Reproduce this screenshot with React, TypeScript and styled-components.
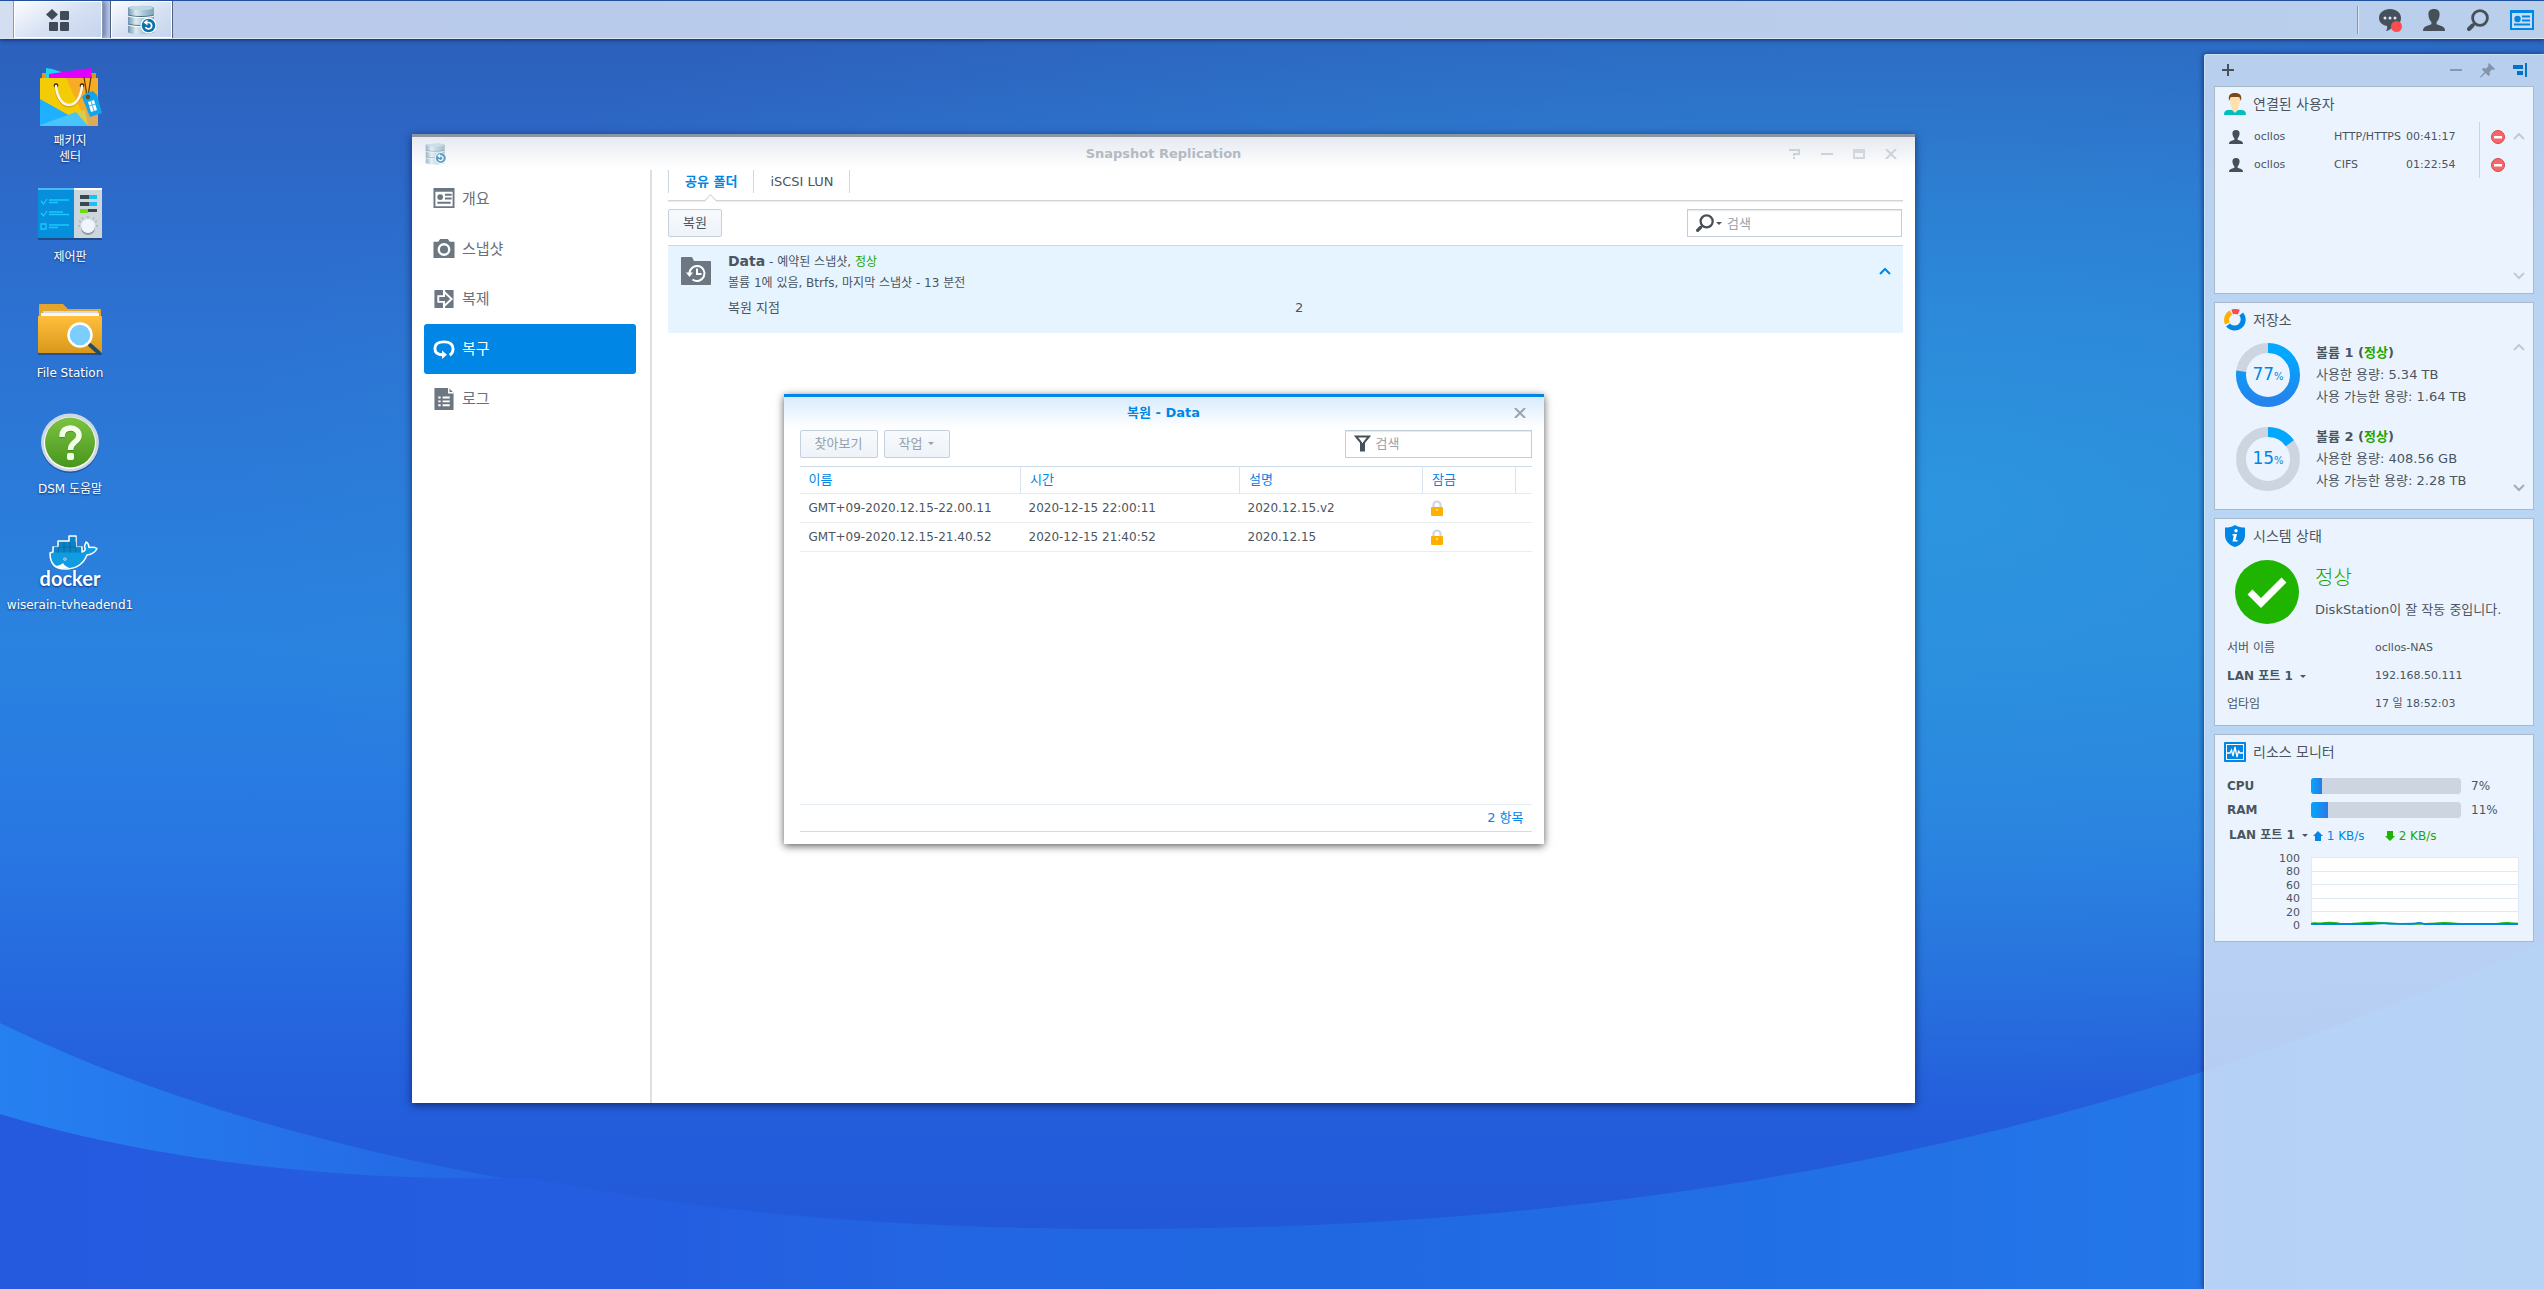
import React from "react";
import styled, { createGlobalStyle, css } from "styled-components";

const blue = "#0086e5";
const green = "#1fa500";
const text = "#4b5560";
const line = "#dbe4ec";

const Global = createGlobalStyle`
  *, *::before, *::after { box-sizing: border-box; }
  html, body, #root { height: 100%; margin: 0; }
  body {
    overflow: hidden;
    color: ${text};
    font: 12px/16px "DejaVu Sans", "Noto Sans CJK KR", sans-serif;
  }
  button, input { font: inherit; color: inherit; margin: 0; }
  button { border: 0; background: none; padding: 0; cursor: pointer; }
  a { color: inherit; text-decoration: none; }
  svg { display: block; flex: none; }
  h1, h2, h3, p, ul, dl, dd, dt { margin: 0; padding: 0; font-size: inherit; font-weight: inherit; }
  ul { list-style: none; }
`;

/* ---------- Shell ---------- */

const Shell = styled.div`
  position: relative;
  isolation: isolate;
  display: flex;
  flex-direction: column;
  height: 100vh;
`;

const WallpaperSvg = styled.svg`
  position: absolute;
  inset: 0;
  z-index: -1;
  width: 100%;
  height: 100%;
`;

const Taskbar = styled.header`
  display: flex;
  align-items: stretch;
  flex: none;
  height: 39px;
  border-top: 1px solid #23509c;
  border-bottom: 1px solid #dce6f4;
  background: linear-gradient(90deg, #b9caec, #b9cfea);
  box-shadow: 0 1px 4px rgba(0, 20, 70, 0.7);
`;

const TaskEdge = styled.div`
  width: 13px;
  background: #d3def1;
`;

const TaskButton = styled.button<{ $width: number; $main?: boolean }>`
  display: grid;
  place-items: center;
  width: ${(p) => p.$width}px;
  border: 1px solid #fff;
  outline: 1px solid #51617d;
  outline-offset: 0;
  clip-path: inset(0 -1px 0 -1px);
  background: linear-gradient(150deg, #fafcff, #d5e0f2 55%, #c7d4ee);
  ${(p) => p.$main && css`
    margin: 0 9px 0 1px;
    box-shadow: 4px 0 5px rgba(60, 80, 130, 0.6);
    outline-color: #8b99b5;
    clip-path: inset(0 -9px 0 -1px);
  `}
`;

const Tray = styled.nav`
  display: flex;
  align-items: center;
  margin-left: auto;
  &::before {
    content: "";
    width: 2px;
    height: 28px;
    margin-right: 9px;
    border-left: 1px solid #8494b3;
    border-right: 1px solid #dbe6f6;
  }
`;

const TrayButton = styled.button`
  display: grid;
  place-items: center;
  width: 44px;
  height: 36px;
`;

const Stage = styled.main`
  display: flex;
  flex: 1;
  min-height: 0;
`;

const Shortcuts = styled.ul`
  width: 140px;
  padding-top: 25px;
`;

const Shortcut = styled.li`
  height: 116px;
`;

const ShortcutLink = styled.a`
  display: flex;
  flex-direction: column;
  align-items: center;
  gap: 5px;
  color: #fff;
  font-size: 12px;
  text-align: center;
  text-shadow: 0 1px 2px rgba(0, 20, 80, 0.7);
`;

const ShortcutLabel = styled.span<{ $narrow?: boolean }>`
  width: ${(p) => (p.$narrow ? "56px" : "auto")};
  word-break: keep-all;
`;

const Workspace = styled.section`
  flex: 1;
  display: flex;
  min-width: 0;
  padding: 95px 289px 186px 272px;
`;

/* ---------- Windows ---------- */

const AppWindow = styled.article`
  position: relative;
  flex: 1;
  display: flex;
  flex-direction: column;
  min-width: 0;
  border-top: 3px solid #8a96a3;
  background: linear-gradient(#e5e9ef, #fff 31px);
  box-shadow: 0 2px 8px rgba(0, 15, 60, 0.65);
`;

const TitleBar = styled.header`
  display: grid;
  grid-template-columns: 1fr auto 1fr;
  align-items: center;
  flex: none;
  height: 33px;
  padding: 0 13px;
`;

const WindowTitle = styled.h1<{ $active?: boolean }>`
  grid-column: 2;
  color: ${(p) => (p.$active ? blue : "#b3bac4")};
  font-size: 13px;
  font-weight: bold;
`;

const WindowControls = styled.div`
  display: flex;
  justify-content: flex-end;
  gap: 20px;
  padding-right: 5px;
`;

const ControlButton = styled.button`
  width: 12px;
  height: 14px;
  display: grid;
  place-items: center;
`;

const WindowBody = styled.div`
  flex: 1;
  display: flex;
  min-height: 0;
`;

const SideNav = styled.nav`
  width: 240px;
  flex: none;
  padding: 4px 14px 0 12px;
  border-right: 2px solid #dcdfe4;
`;

const NavItem = styled.a<{ $active?: boolean }>`
  display: flex;
  align-items: center;
  gap: 7px;
  height: 50px;
  padding-left: 9px;
  border-radius: 3px;
  font-size: 15px;
  line-height: 20px;
  color: ${(p) => (p.$active ? "#fff" : "#66717c")};
  background: ${(p) => (p.$active ? blue : "transparent")};
`;

const Content = styled.section`
  flex: 1;
  min-width: 0;
  padding: 0 12px 0 16px;
`;

const TabList = styled.div`
  display: flex;
  height: 31px;
  padding-bottom: 7px;
  border-bottom: 1px solid #d0d3d8;
  box-shadow: 0 1px 1px #ededef;
`;

const Tab = styled.button<{ $active?: boolean }>`
  position: relative;
  padding: 0 16px;
  border-right: 1px solid #ccd8e6;
  font-size: 13px;
  ${(p) => p.$active && css`
    border-left: 1px solid #ccd8e6;
    color: ${blue};
    font-weight: bold;
    &::after {
      content: "";
      position: absolute;
      left: 50%;
      top: 26px;
      width: 9px;
      height: 9px;
      margin-left: -5px;
      border: 1px solid #d0d3d8;
      border-right: 0;
      border-bottom: 0;
      background: linear-gradient(135deg, #fff 60%, transparent 60%);
      transform: rotate(45deg);
    }
  `}
`;

const Toolbar = styled.div<{ $dialog?: boolean }>`
  display: flex;
  gap: 6px;
  padding: ${(p) => (p.$dialog ? "0 0 8px" : "8px 1px 8px 0")};
`;

const PushButton = styled.button<{ $width: number }>`
  display: inline-flex;
  align-items: center;
  justify-content: center;
  gap: 6px;
  width: ${(p) => p.$width}px;
  height: 28px;
  border: 1px solid #c5d0de;
  border-radius: 2px;
  background: linear-gradient(#f7fafd, #eef3f9);
  font-size: 13px;
  &:disabled { color: #96a0aa; cursor: default; }
`;

const SearchBox = styled.div<{ $width: number }>`
  display: flex;
  align-items: center;
  width: ${(p) => p.$width}px;
  height: 28px;
  margin-left: auto;
  padding-left: 8px;
  border: 1px solid #c3cedb;
  background: #fff;
  box-shadow: inset 0 1px 1px #e6e9ed;
`;

const SearchMode = styled.button`
  display: flex;
  align-items: center;
  gap: 2px;
`;

const SearchInput = styled.input`
  flex: 1;
  min-width: 0;
  height: 24px;
  padding: 0 5px;
  border: 0;
  outline: 0;
  background: none;
  font-size: 13px;
  &::placeholder { color: #98a2ac; opacity: 1; }
`;

const Caret = styled.span`
  border: 3px solid transparent;
  border-top-color: currentColor;
  border-bottom: 0;
`;

const FolderRow = styled.section`
  display: flex;
  align-items: flex-start;
  height: 88px;
  padding: 5px 12px 0 13px;
  border-top: 1px solid #cdd8e3;
  background: #e6f4ff;
  > svg { margin-top: 6px; }
`;

const FolderInfo = styled.div`
  flex: 1;
  padding-left: 17px;
`;

const FolderTitle = styled.h2`
  line-height: 20px;
  > strong { font-size: 14px; }
`;

const FolderMeta = styled.p`
  line-height: 22px;
`;

const PointLine = styled.dl`
  display: grid;
  grid-template-columns: 567px 1fr;
  font-size: 13px;
  line-height: 28px;
`;

const RowToggle = styled.button`
  margin-top: 16px;
`;

const Good = styled.span`
  color: ${green};
`;

/* ---------- Dialog ---------- */

const DialogLayer = styled.div`
  position: absolute;
  inset: 0;
  display: grid;
  place-items: center;
`;

const DialogBox = styled.section`
  display: flex;
  flex-direction: column;
  width: 760px;
  height: 450px;
  margin-top: -3px;
  border-top: 3px solid ${blue};
  background: linear-gradient(#d8ebfb, #fff 31px);
  box-shadow: 0 2px 8px rgba(0, 0, 0, 0.65);
`;

const DialogBody = styled.div`
  display: flex;
  flex-direction: column;
  flex: 1;
  padding: 0 12px 12px 16px;
`;

const SnapTable = styled.table`
  width: 100%;
  table-layout: fixed;
  border-collapse: collapse;
  border-top: 1px solid #cfdbe6;
`;

const HeadCell = styled.th<{ $width?: number }>`
  width: ${(p) => (p.$width ? `${p.$width}px` : "auto")};
  height: 27px;
  padding: 0 9px;
  border-right: 1px solid ${line};
  border-bottom: 1px solid #e4ebf1;
  color: ${blue};
  font-size: 13px;
  font-weight: normal;
  text-align: left;
  &:last-child { border-right: 0; }
`;

const Cell = styled.td`
  height: 29px;
  padding: 0 8px;
  border-bottom: 1px solid #e8edf2;
  &:first-child { padding-left: 9px; }
`;

const DialogFooter = styled.footer`
  margin-top: auto;
  padding-right: 8px;
  border-top: 1px solid #e4ebf1;
  border-bottom: 1px solid #d2dce6;
  color: ${blue};
  font-size: 13px;
  line-height: 26px;
  text-align: right;
`;

/* ---------- Widget panel ---------- */

const Panel = styled.aside`
  flex: none;
  width: 340px;
  margin-top: 15px;
  padding: 0 10px;
  border-radius: 3px 0 0 0;
  background: rgba(222, 233, 249, 0.79);
  box-shadow: inset 1px 1px 0 rgba(230, 240, 252, 0.5), -1px 0 5px rgba(0, 20, 70, 0.6);
`;

const PanelBar = styled.div`
  display: flex;
  align-items: center;
  gap: 18px;
  height: 32px;
  padding: 0 7px 0 8px;
`;

const PanelButton = styled.button<{ $push?: boolean }>`
  margin-right: ${(p) => (p.$push ? "auto" : "0")};
`;

const WidgetList = styled.div`
  display: grid;
  gap: 8px;
`;

const WidgetCard = styled.section`
  display: flex;
  flex-direction: column;
  min-height: 208px;
  border: 1px solid #a9b9cc;
  background: #ebf4fe;
`;

const WidgetHead = styled.header`
  display: flex;
  align-items: center;
  gap: 7px;
  height: 35px;
  padding: 0 0 2px 9px;
`;

const WidgetTitle = styled.h2`
  font-size: 14px;
  line-height: 20px;
`;

const WidgetBody = styled.div`
  display: flex;
  flex: 1;
  align-items: stretch;
`;

const Scroller = styled.div<{ $top: number; $bottom: number }>`
  display: flex;
  flex-direction: column;
  justify-content: space-between;
  margin-left: auto;
  padding: ${(p) => p.$top}px 8px ${(p) => p.$bottom}px 0;
`;

const UserTable = styled.table`
  align-self: flex-start;
  border-collapse: collapse;
  table-layout: fixed;
  width: 298px;
  font-size: 11px;
`;

const UserCell = styled.td<{ $width: number; $left?: number; $divider?: boolean }>`
  width: ${(p) => p.$width}px;
  height: 28px;
  padding: 1px 0 0 ${(p) => p.$left ?? 0}px;
  white-space: nowrap;
  border-right: ${(p) => (p.$divider ? "1px solid #cbd5e0" : "0")};
  > button { display: block; }
`;

const VolumeList = styled.ul`
  display: grid;
  align-content: start;
  gap: 18px;
  padding: 4px 0 0 21px;
`;

const Volume = styled.li`
  display: flex;
  align-items: center;
  gap: 16px;
  font-size: 13px;
  line-height: 22px;
`;

const Donut = styled.div`
  display: grid;
  place-items: center;
  width: 64px;
  height: 64px;
  > * { grid-area: 1 / 1; }
`;

const Percent = styled.span`
  color: ${blue};
  font-size: 17px;
  > small { font-size: 10px; }
`;

const StatusRow = styled.div`
  display: flex;
  align-items: center;
  gap: 16px;
  padding: 6px 0 10px 20px;
`;

const StatusText = styled.div`
  display: grid;
  gap: 8px;
  font-size: 13px;
  line-height: 20px;
`;

const StatusWord = styled.p`
  color: ${green};
  font-size: 20px;
  line-height: 28px;
  font-weight: 300;
`;

const InfoList = styled.dl`
  display: grid;
  grid-template-columns: 148px 1fr;
  padding-left: 12px;
  font-size: 11px;
  line-height: 28px;
  dt { font-size: 12px; }
`;

const PortButton = styled.button`
  display: inline-flex;
  align-items: center;
  gap: 7px;
  font-weight: bold;
`;

const Meters = styled.div`
  padding: 4px 0 0 12px;
`;

const Meter = styled.div`
  display: grid;
  grid-template-columns: 84px 150px 1fr;
  align-items: center;
  height: 24px;
  > strong + div + span { padding-left: 10px; }
`;

const Bar = styled.div`
  height: 16px;
  overflow: hidden;
  border-radius: 3px;
  background: #cdd6e0;
`;

const BarFill = styled.div`
  height: 100%;
  background: linear-gradient(90deg, #00a8ff, #2f78e4);
`;

const Traffic = styled.div`
  display: flex;
  align-items: center;
  height: 26px;
  padding-left: 2px;
`;

const Rate = styled.span<{ $color: string; $left: number }>`
  display: inline-flex;
  align-items: center;
  gap: 4px;
  margin-left: ${(p) => p.$left}px;
  padding-top: 2px;
  color: ${(p) => p.$color};
`;

const ChartRow = styled.div`
  display: flex;
  gap: 11px;
  padding: 4px 14px 0 0;
`;

const Axis = styled.div`
  display: flex;
  flex-direction: column;
  justify-content: space-between;
  width: 85px;
  height: 80px;
  font-size: 11px;
  line-height: 13px;
  text-align: right;
`;

const Plot = styled.svg`
  flex: 1;
  min-width: 0;
  height: 69px;
  margin-top: 5px;
`;

/* ---------- Drawings ---------- */

const Wallpaper = () => (
  <WallpaperSvg viewBox="0 0 2544 1289" preserveAspectRatio="none" aria-hidden="true">
    <defs>
      <linearGradient id="sky" x1="0" y1="0" x2="0" y2="1">
        <stop offset="0" stopColor="#2c5fb9" />
        <stop offset="0.12" stopColor="#2d67c6" />
        <stop offset="0.25" stopColor="#2c72d2" />
        <stop offset="0.5" stopColor="#2a83e0" />
        <stop offset="0.66" stopColor="#2877e3" />
        <stop offset="0.84" stopColor="#245fdc" />
        <stop offset="1" stopColor="#2156d6" />
      </linearGradient>
      <radialGradient id="glow" cx="0.5" cy="0.5" r="0.5">
        <stop offset="0" stopColor="#2d9ae0" stopOpacity="0.85" />
        <stop offset="0.5" stopColor="#2d94dc" stopOpacity="0.5" />
        <stop offset="1" stopColor="#2d8bd8" stopOpacity="0" />
      </radialGradient>
      <linearGradient id="ground" x1="0" y1="0" x2="1" y2="0">
        <stop offset="0" stopColor="#2680f0" />
        <stop offset="0.2" stopColor="#2466e4" />
        <stop offset="0.5" stopColor="#2067e2" />
        <stop offset="0.85" stopColor="#2376e8" />
        <stop offset="1" stopColor="#2480ee" />
      </linearGradient>
      <linearGradient id="hill" x1="0" y1="0" x2="1" y2="0">
        <stop offset="0" stopColor="#255adf" />
        <stop offset="0.6" stopColor="#245ee0" />
        <stop offset="1" stopColor="#2466e4" stopOpacity="0" />
      </linearGradient>
    </defs>
    <rect width="2544" height="1289" fill="url(#sky)" />
    <ellipse cx="1900" cy="500" rx="1700" ry="620" fill="url(#glow)" />
    <path d="M0 1023C260 1150 640 1229 1120 1229C1600 1229 2050 1160 2544 942V1289H0Z" fill="url(#ground)" />
    <path d="M0 1114C150 1160 340 1182 530 1178C700 1212 900 1229 1120 1229V1289H0Z" fill="url(#hill)" />
  </WallpaperSvg>
);

const ReplicationIcon = ({ size, faded }: { size: number; faded?: boolean }) => (
  <svg width={size} height={size} viewBox="0 0 30 30" opacity={faded ? 0.65 : 1} aria-hidden="true">
    <defs>
      <linearGradient id="disk" x1="0" x2="1">
        <stop offset="0" stopColor="#6d94b0" />
        <stop offset="0.3" stopColor="#dcebf3" />
        <stop offset="0.6" stopColor="#a9c6d6" />
        <stop offset="1" stopColor="#7fa5bd" />
      </linearGradient>
    </defs>
    <path d="M1 3c0-3 26-3 26 0v24c0 3-26 3-26 0z" fill="url(#disk)" />
    <ellipse cx="14" cy="3" rx="12" ry="2" fill="#bfd6e3" />
    <path d="M1 10c4 2 22 2 26 0M1 19c4 2 22 2 26 0" fill="none" stroke="#4d6b7e" strokeWidth="1" />
    <path d="M1 11c4 2 22 2 26 0M1 20c4 2 22 2 26 0" fill="none" stroke="#fff" strokeWidth="1" />
    <circle cx="21.500" cy="20.500" r="8" fill="#fff" />
    <circle cx="21.500" cy="20.500" r="6.800" fill="#0a72ad" />
    <path d="M19 17.500h2.500a3.200 3.200 0 1 1-3 4.500" fill="none" stroke="#fff" strokeWidth="1.700" />
    <path d="M20.500 14.500v6l-4-3z" fill="#fff" />
  </svg>
);

const PersonIcon = ({ size }: { size: number }) => (
  <svg width={size} height={size} viewBox="0 0 22 22" fill="#46505b" aria-hidden="true">
    <path d="M11 0C7 0 5.200 2.200 5.400 5.500C5.500 9 6.800 11.500 8.400 13V15.200L3 17.300C1 18 0 19.500 0 22H22C22 19.500 21 18 19 17.300L13.600 15.200V13C15.200 11.500 16.500 9 16.600 5.500C16.800 2.200 15 0 11 0Z" />
  </svg>
);

const LensIcon = ({ size }: { size: number }) => (
  <svg width={size} height={size} viewBox="0 0 22 22" fill="none" stroke="#46505b" aria-hidden="true">
    <circle cx="13" cy="9" r="7.400" strokeWidth="2.800" />
    <path d="M7.500 14.500L5.500 16.500" strokeWidth="2.500" />
    <path d="M5.500 16.500L2 20" strokeWidth="4" strokeLinecap="round" />
  </svg>
);

const Chevron = ({ down, color }: { down?: boolean; color: string }) => (
  <svg width="12" height="8" viewBox="0 0 12 8" fill="none" stroke={color} strokeWidth="2" aria-hidden="true">
    <path d={down ? "M1 1L6 6L11 1" : "M1 7L6 2L11 7"} />
  </svg>
);

const CloseIcon = ({ color }: { color: string }) => (
  <svg width="12" height="10" viewBox="0 0 12 10" stroke={color} strokeWidth="2" aria-hidden="true">
    <path d="M1 0L11 10M11 0L1 10" />
  </svg>
);

const PackageIcon = () => (
  <svg width="64" height="64" viewBox="0 0 64 64" aria-hidden="true">
    <path d="M4 9h54v6H4z" fill="#d99a1c" />
    <path d="M8 4l6 1 16 5-22 5z" fill="#1fd3f5" />
    <path d="M11 10l42-6 1 11H11z" fill="#e100ff" />
    <rect x="2" y="14" width="58" height="48" rx="1" fill="#f4cc05" />
    <path d="M28 14h31a1 1 0 0 1 1 1v46a1 1 0 0 1-1 1H50z" fill="#f7ac26" />
    <path d="M46 46l14-3v19H50z" fill="#e0a957" />
    <path d="M2 35l48 27H2z" fill="#1fb0ff" />
    <path d="M38 48l9-2 3 16z" fill="#d9cc46" />
    <path d="M2 61l36-13 12 14H3z" fill="#47c4fb" />
    <path d="M18 24c1 10 6 18 13 18s12-8 13-18" fill="none" stroke="#c78b10" strokeWidth="3" opacity=".6" />
    <circle cx="18" cy="21.500" r="2.300" fill="#3a1d00" />
    <circle cx="44" cy="21.500" r="2.300" fill="#3a1d00" />
    <path d="M18 22c1 11 6 19 13 19s12-8 13-19" fill="none" stroke="#fdf6ea" strokeWidth="2.600" strokeLinecap="round" />
    <path d="M46 13l3 19M53 13l-3 19" stroke="#5d3800" strokeWidth="1.200" />
    <path d="M44 33l4-4 7-2 4 4 5 18-12 4z" fill="#12a5ec" />
    <circle cx="50" cy="33" r="2.200" fill="#6b4a1b" />
    <path d="M50 38l6-2 3 10-6 2z" fill="#fff" />
    <path d="M53 37l3 10M50 42l8-2" stroke="#12a5ec" strokeWidth="0.800" />
  </svg>
);

const ControlPanelIcon = () => (
  <svg width="64" height="64" viewBox="0 0 64 64" aria-hidden="true">
    <rect x="0" y="10" width="64" height="50" rx="1" fill="#1d3c6b" opacity=".7" />
    <rect x="0" y="8" width="36" height="50" fill="#058fdc" />
    <rect x="0" y="8" width="36" height="2" fill="#4db8f3" />
    <rect x="36" y="8" width="28" height="50" fill="#cdd6dd" />
    <rect x="36" y="8" width="28" height="2" fill="#fff" />
    <g fill="none" stroke="#19c9fb" strokeWidth="1.300">
      <path d="M3 21l2.500 3L9 19M3 33l2.500 3L9 31M3 44h5v5H3zM11 20h20M11 22.500h9M11 32h14M11 34.500h20M11 45h20M11 47.500h9" />
    </g>
    <path d="M42 15h17v4H42zM42 22h17v4H42zM42 29h17v3H42z" fill="#3a4650" />
    <path d="M51 15h8v4h-8zM51 22h8v4h-8z" fill="#17c2fb" />
    <path d="M42 29h8v4h-8z" fill="#72dc0a" />
    <path d="M50 36v2M44 37.500l1 2M56 37.500l-1 2M41 41l2 1M59 41l-2 1M40 46h2M58 46h2" stroke="#9ba5ae" />
    <circle cx="50" cy="48" r="7" fill="#8f9aa3" />
    <circle cx="50" cy="46" r="7" fill="#eef6fb" />
  </svg>
);

const FileStationIcon = () => (
  <svg width="64" height="64" viewBox="0 0 64 64" aria-hidden="true">
    <defs>
      <linearGradient id="folder" x1="0" x2="0" y1="0" y2="1">
        <stop offset="0" stopColor="#ffbf3c" />
        <stop offset="1" stopColor="#d9981c" />
      </linearGradient>
    </defs>
    <path d="M1 9a1 1 0 0 1 1-1h23l5 5h32a1 1 0 0 1 1 1v10H1z" fill="#e3a62d" />
    <path d="M5 15h55v6H5z" fill="#d8d8d8" />
    <path d="M3 17h58v4H3z" fill="#f6f6f6" />
    <rect x="0" y="21" width="64" height="38" rx="1" fill="#1f3a6e" opacity=".6" />
    <rect x="0" y="20" width="64" height="37" rx="1" fill="url(#folder)" />
    <path d="M52 49l9 8" stroke="#244c66" strokeWidth="4" strokeLinecap="round" />
    <circle cx="42" cy="39" r="11.500" fill="#7bcdfc" stroke="#fff" strokeWidth="2.400" />
  </svg>
);

const HelpIcon = () => (
  <svg width="64" height="64" viewBox="0 0 64 64" aria-hidden="true">
    <defs>
      <linearGradient id="help" x1="0" x2="0" y1="0" y2="1">
        <stop offset="0" stopColor="#7cc242" />
        <stop offset="1" stopColor="#47961c" />
      </linearGradient>
    </defs>
    <circle cx="32" cy="32" r="29" fill="#173d7d" opacity=".6" />
    <circle cx="32" cy="30.500" r="29" fill="#ccd8e4" />
    <circle cx="32" cy="31" r="26" fill="#fff" />
    <circle cx="32" cy="30.500" r="25" fill="url(#help)" />
    <g fill="none" stroke="#2f6d12" strokeWidth="5.500" opacity=".5">
      <path d="M24 26c0-7 4-9 8.500-9s8.500 3 8.500 7.500c0 7-8.500 6-8.500 14.500" />
    </g>
    <path d="M24 25c0-7 4-9 8.500-9s8.500 3 8.500 7.500c0 7-8.500 6-8.500 14.500" fill="none" stroke="#f4ffe9" strokeWidth="5.500" />
    <rect x="29" y="41" width="7" height="7" rx="2" fill="#f4ffe9" />
  </svg>
);

const DockerWord = styled.text`
  font: bold 20px Lato, sans-serif;
  fill: #fff;
`;

const DockerIcon = () => (
  <svg width="64" height="64" viewBox="0 0 64 64" aria-hidden="true">
    <path
      d="M12 25L15 24V19H20V13H31V8H38V19H44V24C47 23 48 22 46.500 18L48 14C50 15 51 17 51 19.500C54 19 57 19 59 20.500C57 25 53 26.500 49 27C45 37 38 41 27 41C17 41 12 35 12 25Z"
      fill="#109be3" stroke="#fff" strokeWidth="1.500" strokeLinejoin="round"
    />
    <path d="M16 19.500h27v5H16zM21 14h17v5H21zM32 9h5.500v5H32z" fill="#0b83c4" />
    <path d="M20.500 19.500v5M26 14v10.500M32 14v10.500M37.500 19.500v5M16 19.200h27" stroke="#06669f" strokeWidth="0.800" />
    <circle cx="27" cy="31" r="1.600" fill="#fff" />
    <circle cx="27" cy="31" r="0.800" fill="#1c4c74" />
    <path d="M17 38c3 0 6-1 8-3 1 2 3 4 6 4.500-5 1.500-10 1-14-1.500z" fill="#fff" />
    <DockerWord x="32" y="58" textAnchor="middle">docker</DockerWord>
  </svg>
);

const navIcons: Record<string, React.ReactNode> = {
  overview: (
    <>
      <path d="M0 0h22v21H0zM2 4v15h18V4z" fillRule="evenodd" />
      <circle cx="7" cy="9.500" r="3" />
      <path d="M12 6h7v2h-7zM12 10h7v2h-7zM4 14.500h14v2H4z" />
    </>
  ),
  camera: (
    <>
      <path d="M0 4h5l2-3h8l2 3h5v17H0z" />
      <circle cx="11" cy="12" r="5.500" fill="none" stroke="#fff" strokeWidth="2.500" />
    </>
  ),
  replicate: (
    <>
      <path d="M1 2h9v19H1zM12 2h9v19h-9z" />
      <path d="M5 8.500h6V4l8 7.500-8 7.500v-4.500H5z" stroke="#fff" strokeWidth="2" />
    </>
  ),
  recover: (
    <>
      <path d="M17 18c2.500-1.500 3.500-3.500 3.500-6.500C20.500 6 17 4 11 4S1.500 6 1.500 11c0 4.500 3 6.500 8 6.500" fill="none" stroke="#fff" strokeWidth="3" />
      <path d="M9 13l5 4.500L9 22z" />
    </>
  ),
  log: (
    <>
      <path d="M1 0h15l5 5v18H1z" />
      <path d="M16 0v5h5" fill="none" stroke="#fff" strokeWidth="1.500" />
      <path d="M5 9h2.500v2H5zM9.500 9H17v2H9.500zM5 13h2.500v2H5zM9.500 13H17v2H9.500zM5 17h2.500v2H5zM9.500 17H17v2H9.500z" fill="#fff" />
    </>
  ),
};

const LockIcon = () => (
  <svg width="12" height="16" viewBox="0 0 12 16" role="img" aria-label="잠금">
    <path d="M2.500 8V5a3.500 3.500 0 0 1 7 0v3" fill="none" stroke="#cdd6e0" strokeWidth="2.200" />
    <rect y="7" width="12" height="9" rx="1" fill="#ffb000" />
    <path d="M5 10h2" stroke="#fff" strokeWidth="1.200" />
  </svg>
);

/* ---------- Data ---------- */

const shortcuts = [
  { label: "패키지 센터", icon: <PackageIcon />, narrow: true },
  { label: "제어판", icon: <ControlPanelIcon /> },
  { label: "File Station", icon: <FileStationIcon /> },
  { label: "DSM 도움말", icon: <HelpIcon /> },
  { label: "wiserain-tvheadend1", icon: <DockerIcon /> },
];

const navigation = [
  { label: "개요", icon: "overview" },
  { label: "스냅샷", icon: "camera" },
  { label: "복제", icon: "replicate" },
  { label: "복구", icon: "recover", active: true },
  { label: "로그", icon: "log" },
];

const snapshots = [
  { name: "GMT+09-2020.12.15-22.00.11", time: "2020-12-15 22:00:11", note: "2020.12.15.v2" },
  { name: "GMT+09-2020.12.15-21.40.52", time: "2020-12-15 21:40:52", note: "2020.12.15" },
];

const users = [
  { name: "ocllos", protocol: "HTTP/HTTPS", time: "00:41:17" },
  { name: "ocllos", protocol: "CIFS", time: "01:22:54" },
];

const volumes = [
  { name: "볼륨 1", percent: 77, used: "5.34 TB", free: "1.64 TB" },
  { name: "볼륨 2", percent: 15, used: "408.56 GB", free: "2.28 TB" },
];

const meters = [
  { name: "CPU", value: 7 },
  { name: "RAM", value: 11 },
];

/* ---------- Parts ---------- */

const Widget = ({ title, icon, children }: { title: string; icon: React.ReactNode; children: React.ReactNode }) => (
  <WidgetCard>
    <WidgetHead>
      {icon}
      <WidgetTitle>{title}</WidgetTitle>
    </WidgetHead>
    {children}
  </WidgetCard>
);

const ScrollArrows = ({ top, bottom, more }: { top: number; bottom: number; more?: boolean }) => (
  <Scroller $top={top} $bottom={bottom}>
    <button aria-label="위로"><Chevron color="#c3cad3" /></button>
    <button aria-label="아래로"><Chevron down color={more ? "#a2abb7" : "#c3cad3"} /></button>
  </Scroller>
);

const Usage = ({ percent }: { percent: number }) => {
  const around = 2 * Math.PI * 27;
  return (
    <Donut>
      <svg width="64" height="64" viewBox="0 0 64 64" fill="none" strokeWidth="10" aria-hidden="true">
        <defs>
          <linearGradient id="usage" x1="0" x2="1">
            <stop offset="0" stopColor="#2483ec" />
            <stop offset="0.9" stopColor="#00a8ff" />
          </linearGradient>
        </defs>
        <circle cx="32" cy="32" r="27" stroke="#cdd6e0" />
        <circle
          cx="32" cy="32" r="27"
          stroke="url(#usage)"
          strokeDasharray={`${(around * percent) / 100} ${around}`}
          transform="rotate(-90 32 32)"
        />
      </svg>
      <Percent>{percent}<small>%</small></Percent>
    </Donut>
  );
};

const RestoreDialog = () => (
  <DialogLayer>
    <DialogBox role="dialog" aria-labelledby="restore-title">
      <TitleBar>
        <WindowTitle id="restore-title" $active>복원 - Data</WindowTitle>
        <WindowControls>
          <ControlButton aria-label="닫기"><CloseIcon color="#9aa4b0" /></ControlButton>
        </WindowControls>
      </TitleBar>
      <DialogBody>
        <Toolbar $dialog>
          <PushButton $width={78} disabled>찾아보기</PushButton>
          <PushButton $width={66} disabled>작업 <Caret /></PushButton>
          <SearchBox $width={187}>
            <svg width="17" height="17" viewBox="0 0 17 17" aria-hidden="true">
              <path d="M2 1.500h13L10 7.500v8H7v-8z" fill="#fff" stroke="#46505b" strokeWidth="2" />
              <path d="M7 8h3v8H7z" fill="#46505b" />
            </svg>
            <SearchInput aria-label="스냅샷 검색" placeholder="검색" />
          </SearchBox>
        </Toolbar>
        <SnapTable>
          <thead>
            <tr>
              <HeadCell $width={221}>이름</HeadCell>
              <HeadCell $width={219}>시간</HeadCell>
              <HeadCell $width={183}>설명</HeadCell>
              <HeadCell $width={93}>잠금</HeadCell>
              <HeadCell />
            </tr>
          </thead>
          <tbody>
            {snapshots.map((s) => (
              <tr key={s.name}>
                <Cell>{s.name}</Cell>
                <Cell>{s.time}</Cell>
                <Cell>{s.note}</Cell>
                <Cell><LockIcon /></Cell>
                <Cell />
              </tr>
            ))}
          </tbody>
        </SnapTable>
        <DialogFooter>2 항목</DialogFooter>
      </DialogBody>
    </DialogBox>
  </DialogLayer>
);

const ReplicationWindow = () => (
  <AppWindow>
    <TitleBar>
      <ReplicationIcon size={22} faded />
      <WindowTitle>Snapshot Replication</WindowTitle>
      <WindowControls>
        <ControlButton aria-label="도움말">
          <svg width="12" height="10" viewBox="0 0 12 10" fill="none" stroke="#cdd1d8" strokeWidth="2" aria-hidden="true">
            <path d="M0 1h10v4H5v2M4 9h2" />
          </svg>
        </ControlButton>
        <ControlButton aria-label="최소화">
          <svg width="12" height="2" viewBox="0 0 12 2" aria-hidden="true"><path d="M0 0h12v2H0z" fill="#cdd1d8" /></svg>
        </ControlButton>
        <ControlButton aria-label="최대화">
          <svg width="12" height="10" viewBox="0 0 12 10" aria-hidden="true">
            <path d="M0 0h12v10H0zM2 4v4h8V4z" fill="#d3d7dd" fillRule="evenodd" />
          </svg>
        </ControlButton>
        <ControlButton aria-label="창 닫기"><CloseIcon color="#cdd1d8" /></ControlButton>
      </WindowControls>
    </TitleBar>
    <WindowBody>
      <SideNav>
        {navigation.map((n) => (
          <NavItem key={n.label} href="#" $active={n.active}>
            <svg width="22" height="22" viewBox="0 0 22 23" fill={n.active ? "#fff" : "#6c7782"} aria-hidden="true">
              {navIcons[n.icon]}
            </svg>
            {n.label}
          </NavItem>
        ))}
      </SideNav>
      <Content>
        <TabList role="tablist">
          <Tab role="tab" aria-selected="true" $active>공유 폴더</Tab>
          <Tab role="tab" aria-selected="false">iSCSI LUN</Tab>
        </TabList>
        <Toolbar>
          <PushButton $width={54}>복원</PushButton>
          <SearchBox $width={215}>
            <SearchMode aria-label="검색 조건"><LensIcon size={18} /><Caret /></SearchMode>
            <SearchInput aria-label="공유 폴더 검색" placeholder="검색" />
          </SearchBox>
        </Toolbar>
        <FolderRow>
          <svg width="30" height="28" viewBox="0 0 30 28" aria-hidden="true">
            <path d="M0 1a1 1 0 0 1 1-1h10l2 4h16a1 1 0 0 1 1 1v22a1 1 0 0 1-1 1H1a1 1 0 0 1-1-1z" fill="#6c7782" />
            <path d="M8.500 17a7.500 7.500 0 1 1 3 5.500" fill="none" stroke="#fff" strokeWidth="2" />
            <path d="M5 15.500h7L8.500 20z" fill="#fff" />
            <path d="M16 11.500V17h4.500" fill="none" stroke="#fff" strokeWidth="2" />
          </svg>
          <FolderInfo>
            <FolderTitle><strong>Data</strong> - 예약된 스냅샷, <Good>정상</Good></FolderTitle>
            <FolderMeta>볼륨 1에 있음, Btrfs, 마지막 스냅샷 - 13 분전</FolderMeta>
            <PointLine><dt>복원 지점</dt><dd>2</dd></PointLine>
          </FolderInfo>
          <RowToggle aria-label="접기"><Chevron color={blue} /></RowToggle>
        </FolderRow>
      </Content>
    </WindowBody>
    <RestoreDialog />
  </AppWindow>
);

const WidgetPanel = () => (
  <Panel>
    <PanelBar>
      <PanelButton $push aria-label="위젯 추가">
        <svg width="12" height="12" viewBox="0 0 12 12" stroke="#46505b" strokeWidth="2" aria-hidden="true"><path d="M6 0v12M0 6h12" /></svg>
      </PanelButton>
      <PanelButton aria-label="위젯 숨기기">
        <svg width="12" height="2" viewBox="0 0 12 2" aria-hidden="true"><path d="M0 0h12v2H0z" fill="#8797ae" /></svg>
      </PanelButton>
      <PanelButton aria-label="고정">
        <svg width="15" height="15" viewBox="0 0 15 15" fill="#8494ab" aria-hidden="true">
          <path d="M9 0l6 6-1 1-2-.5-2.500 2.500.5 3-1.500 1L5.500 10 1 14.500 0 14l4.500-5L2 6.500 3 5l3 .5L8.500 3 8 1z" />
        </svg>
      </PanelButton>
      <PanelButton aria-label="오른쪽에 고정">
        <svg width="14" height="14" viewBox="0 0 14 14" fill="#0072c8" aria-hidden="true">
          <path d="M0 2h10v4H0zM4 8h6v4H4zM12 0h2v14h-2z" />
        </svg>
      </PanelButton>
    </PanelBar>
    <WidgetList>
      <Widget
        title="연결된 사용자"
        icon={
          <svg width="22" height="22" viewBox="0 0 22 22" aria-hidden="true">
            <path d="M0 22c0-4 2-5 5-5h12c3 0 5 1 5 5z" fill="#00bfc0" />
            <path d="M8 13h6v4l-3 3-3-3z" fill="#ffdfae" />
            <path d="M6 5c0-3 10-3 10 0 0 6-1 11-5 11S6 11 6 5z" fill="#ffdfae" />
            <path d="M5 8C4 2 6 0 11 0s7 2 6 8c-1-2-1-3-2-4H7C6 5 6 6 5 8z" fill="#7a4a1c" />
          </svg>
        }
      >
        <WidgetBody>
          <UserTable>
            <tbody>
              {users.map((u) => (
                <tr key={u.protocol}>
                  <UserCell $width={39} $left={14}><PersonIcon size={14} /></UserCell>
                  <UserCell $width={80}>{u.name}</UserCell>
                  <UserCell $width={72}>{u.protocol}</UserCell>
                  <UserCell $width={73} $divider>{u.time}</UserCell>
                  <UserCell $width={34} $left={11}>
                    <button aria-label="연결 끊기">
                      <svg width="14" height="14" viewBox="0 0 14 14" aria-hidden="true">
                        <circle cx="7" cy="7" r="6.500" fill="#f4686b" stroke="#d9474b" />
                        <path d="M3 6h8v2.500H3z" fill="#fff" />
                      </svg>
                    </button>
                  </UserCell>
                </tr>
              ))}
            </tbody>
          </UserTable>
          <ScrollArrows top={10} bottom={13} />
        </WidgetBody>
      </Widget>

      <Widget
        title="저장소"
        icon={
          <svg width="22" height="22" viewBox="0 0 22 22" fill="none" strokeWidth="5" aria-hidden="true">
            <path d="M17.200 5A8.500 8.500 0 1 1 4 16" stroke="#0086e5" />
            <path d="M3.300 14.500A8.500 8.500 0 0 1 7 3.500" stroke="#ffb000" />
            <path d="M8.200 3A8.500 8.500 0 0 1 14.800 3.300" stroke="#ff4b4b" />
          </svg>
        }
      >
        <WidgetBody>
          <VolumeList>
            {volumes.map((v) => (
              <Volume key={v.name}>
                <Usage percent={v.percent} />
                <div>
                  <strong>{v.name} (<Good>정상</Good>)</strong>
                  <p>사용한 용량: {v.used}</p>
                  <p>사용 가능한 용량: {v.free}</p>
                </div>
              </Volume>
            ))}
          </VolumeList>
          <ScrollArrows top={5} bottom={17} more />
        </WidgetBody>
      </Widget>

      <Widget
        title="시스템 상태"
        icon={
          <svg width="22" height="22" viewBox="0 0 22 22" aria-hidden="true">
            <path d="M11 0c3 2 6 2.500 10 2.500V10c0 6-4 10-10 12C5 20 1 16 1 10V2.500C5 2.500 8 2 11 0z" fill="#0086e5" />
            <circle cx="12" cy="5.800" r="1.700" fill="#fff" />
            <path d="M8.500 9h4.500l-1.500 6h2v1.500h-5L9.800 10.500H8.500z" fill="#fff" />
          </svg>
        }
      >
        <StatusRow>
          <svg width="64" height="64" viewBox="0 0 64 64" aria-hidden="true">
            <circle cx="32" cy="32" r="32" fill="#1fb400" />
            <path d="M15 32l11 11 23-23" fill="none" stroke="#fff" strokeWidth="7" />
          </svg>
          <StatusText>
            <StatusWord>정상</StatusWord>
            <p>DiskStation이 잘 작동 중입니다.</p>
          </StatusText>
        </StatusRow>
        <InfoList>
          <dt>서버 이름</dt><dd>ocllos-NAS</dd>
          <dt><PortButton>LAN 포트 1 <Caret /></PortButton></dt><dd>192.168.50.111</dd>
          <dt>업타임</dt><dd>17 일 18:52:03</dd>
        </InfoList>
      </Widget>

      <Widget
        title="리소스 모니터"
        icon={
          <svg width="22" height="20" viewBox="0 0 22 20" aria-hidden="true">
            <rect width="22" height="20" rx="1" fill="#0086e5" />
            <rect x="2.500" y="2.500" width="17" height="15" fill="none" stroke="#fff" />
            <path d="M3 11h3l1.500-3L9 14l2-9 2 10 1.500-6 1.500 2h3" fill="none" stroke="#fff" strokeWidth="1.300" />
          </svg>
        }
      >
        <Meters>
          {meters.map((m) => (
            <Meter key={m.name}>
              <strong>{m.name}</strong>
              <Bar role="progressbar" aria-label={m.name} aria-valuenow={m.value}>
                <BarFill style={{ width: `${m.value}%` }} />
              </Bar>
              <span>{m.value}%</span>
            </Meter>
          ))}
          <Traffic>
            <PortButton>LAN 포트 1 <Caret /></PortButton>
            <Rate $color={blue} $left={5}>
              <svg width="10" height="10" viewBox="0 0 10 10" fill={blue} aria-hidden="true"><path d="M5 0l5 5H8v5H2V5H0z" /></svg>
              1 KB/s
            </Rate>
            <Rate $color={green} $left={20}>
              <svg width="10" height="10" viewBox="0 0 10 10" fill="#1fb400" aria-hidden="true"><path d="M5 10l5-5H8V0H2v5H0z" /></svg>
              2 KB/s
            </Rate>
          </Traffic>
        </Meters>
        <ChartRow>
          <Axis>
            {[100, 80, 60, 40, 20, 0].map((n) => <span key={n}>{n}</span>)}
          </Axis>
          <Plot viewBox="0 0 208 69" preserveAspectRatio="none" role="img" aria-label="네트워크 사용량">
            <rect width="208" height="69" fill="#fff" />
            <path d="M0 .5h208M0 14.500h208M0 27.500h208M0 41.500h208M0 54.500h208M.5 0v68M207.500 0v68" fill="none" stroke="#e0eaf4" />
            <path d="M0 66.500C3 65 5 67 12 66S28 66 30 67C40 67 48 66 58 65.500S80 66 90 67C100 67 112 67 120 66.500S132 65 145 66.500C150 67 170 66.500 178 67S190 65 200 66L207 66.500" fill="none" stroke="#1fb400" strokeWidth="1.500" />
            <path d="M0 67H60C66 67 70 66 76 66.500S100 67 104 66.500C107 65.500 110 65.500 113 67H207" fill="none" stroke="#0086e5" strokeWidth="1.800" />
          </Plot>
        </ChartRow>
      </Widget>
    </WidgetList>
  </Panel>
);

export default function App() {
  return (
    <>
      <Global />
      <Shell>
        <Wallpaper />
        <Taskbar>
          <TaskEdge />
          <TaskButton $width={88} $main aria-label="메인 메뉴">
            <svg width="24" height="22" viewBox="0 0 24 22" fill="#414b57" aria-hidden="true">
              <path d="M6 0l6 5.500-6 5.500L0 5.500z" />
              <rect x="14" y="2" width="9" height="9" rx="1" />
              <rect x="3" y="13" width="9" height="9" rx="1" />
              <rect x="14" y="13" width="9" height="9" rx="1" />
            </svg>
          </TaskButton>
          <TaskButton $width={61} aria-label="Snapshot Replication"><ReplicationIcon size={30} /></TaskButton>
          <Tray>
            <TrayButton aria-label="알림">
              <svg width="24" height="24" viewBox="0 0 24 24" aria-hidden="true">
                <path d="M12 1c6 0 11 3.500 11 9s-4 8-8 8.500c-2 2.500-4 4-7 4.500 1-1.500 1.500-3 1-5C4 17 1 14 1 10 1 4.500 6 1 12 1z" fill="#46505b" />
                <circle cx="7" cy="10" r="1.500" fill="#dfe8f5" />
                <circle cx="12" cy="10" r="1.500" fill="#dfe8f5" />
                <circle cx="17" cy="10" r="1.500" fill="#dfe8f5" />
                <circle cx="18.500" cy="18.500" r="5.500" fill="#ff4b4b" />
              </svg>
            </TrayButton>
            <TrayButton aria-label="옵션"><PersonIcon size={22} /></TrayButton>
            <TrayButton aria-label="검색"><LensIcon size={22} /></TrayButton>
            <TrayButton aria-label="위젯">
              <svg width="24" height="20" viewBox="0 0 24 20" aria-hidden="true">
                <path d="M0 0h24v20H0z" fill="#0086e5" />
                <path d="M2 3h20v15H2z" fill="#c9dcf4" />
                <circle cx="7.500" cy="9" r="3.200" fill="#0086e5" />
                <path d="M12 6.500h8M12 10.500h8M4 14.500h16" stroke="#0086e5" strokeWidth="1.800" />
              </svg>
            </TrayButton>
          </Tray>
        </Taskbar>
        <Stage>
          <Shortcuts>
            {shortcuts.map((s) => (
              <Shortcut key={s.label}>
                <ShortcutLink href="#">
                  {s.icon}
                  <ShortcutLabel $narrow={s.narrow}>{s.label}</ShortcutLabel>
                </ShortcutLink>
              </Shortcut>
            ))}
          </Shortcuts>
          <Workspace>
            <ReplicationWindow />
          </Workspace>
          <WidgetPanel />
        </Stage>
      </Shell>
    </>
  );
}
